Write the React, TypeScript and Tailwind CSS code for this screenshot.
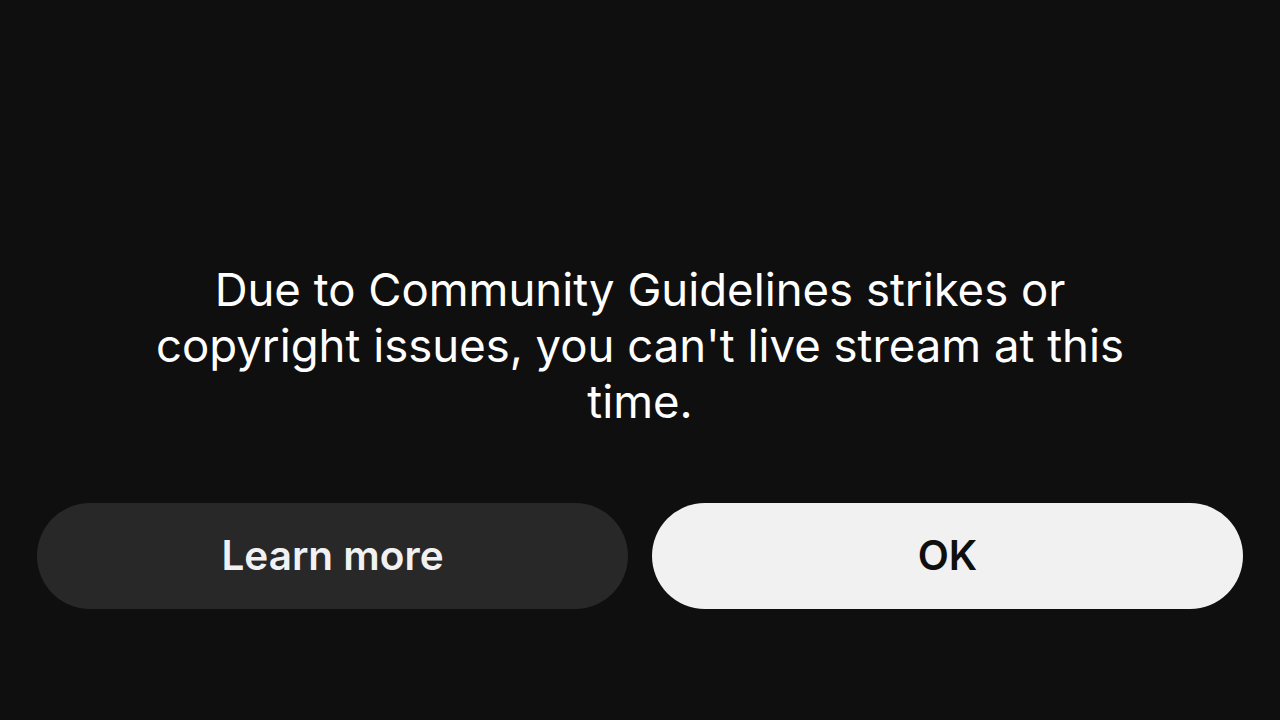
export default function App() {
  return (
    <div className="w-[1280px] h-[720px] bg-[#0f0f0f] flex flex-col justify-end px-[37px] pb-[111px] font-['Inter','Liberation_Sans',sans-serif]">
      <p className="text-center text-white text-[45.5px] leading-[56px] px-[90px] mb-[73px]">
        Due to Community Guidelines strikes or copyright issues, you can't live stream at this time.
      </p>
      <div className="flex gap-[24px]">
        <button className="flex-1 h-[106px] rounded-full bg-[#282828] text-[#f1f1f1] text-[40.5px] font-semibold">
          Learn more
        </button>
        <button className="flex-1 h-[106px] rounded-full bg-[#f1f1f1] text-[#0f0f0f] text-[40.5px] font-semibold">
          OK
        </button>
      </div>
    </div>
  );
}
